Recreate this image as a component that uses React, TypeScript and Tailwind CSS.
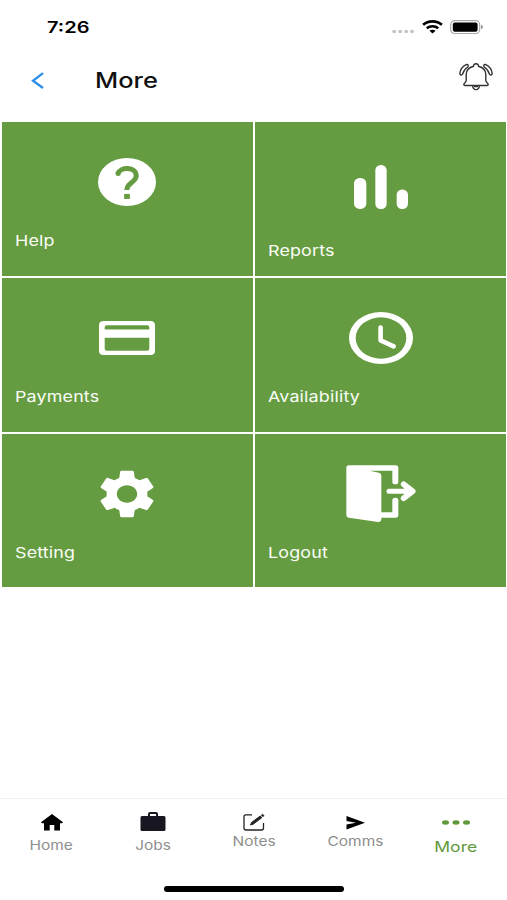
import React from 'react'
import { MdSettings } from 'react-icons/md'

interface TileProps {
  label: string
  iconClass: string
  labelClass: string
  children: React.ReactNode
}

const HelpIcon = () => (
  <svg className="w-[58px] h-[48px]" viewBox="296 129 173 143" preserveAspectRatio="none">
    <ellipse cx="382.5" cy="200.5" rx="86.5" ry="71.5" fill="#fff" />
    <path d="M355 176C362 154 410 154 410 182C410 202 382 202 382 224" fill="none" stroke="#669c41" strokeWidth="15" />
    <circle cx="356" cy="175" r="7.5" fill="#669c41" />
    <rect x="374" y="236" width="17" height="15" fill="#669c41" />
  </svg>
)

const ReportsIcon = () => (
  <svg className="w-[54px] h-[44px]" viewBox="298 151 162 133" preserveAspectRatio="none" fill="#fff">
    <rect x="298" y="190" width="37" height="94" rx="17" />
    <rect x="362" y="151" width="34" height="133" rx="16" />
    <rect x="426" y="225" width="34" height="59" rx="16" />
  </svg>
)

const CardIcon = () => (
  <svg className="w-[56px] h-[34px]" viewBox="299 138 167 103" preserveAspectRatio="none">
    <path
      fill="#fff"
      fillRule="evenodd"
      d="M313 138H452Q466 138 466 151V228Q466 241 452 241H313Q299 241 299 228V151Q299 138 313 138ZM316 164H449V157Q449 151 443 151H322Q316 151 316 157ZM316 189V222Q316 228 322 228H443Q449 228 449 222V189Z"
    />
  </svg>
)

const ClockIcon = () => (
  <svg className="w-[64px] h-[52px]" viewBox="0 0 64 52" fill="none" stroke="#fff">
    <path
      fill="#fff"
      stroke="none"
      fillRule="evenodd"
      d="M0 26A32 26 0 0 1 64 26A32 26 0 0 1 0 26ZM6.7 26A25.3 20.7 0 0 0 57.3 26A25.3 20.7 0 0 0 6.7 26Z"
    />
    <path d="M31.6 15.5V28.3L44.7 34.3" strokeWidth="4.6" strokeLinecap="round" strokeLinejoin="round" />
  </svg>
)

const LogoutIcon = () => (
  <svg className="w-[70px] h-[57px]" viewBox="275 106 210 171" preserveAspectRatio="none">
    <path d="M284 107H424Q432 107 432 115V156Q432 164 423 164Q414 164 414 156V123H346L374 129Q381 131 381 138V248H414V212Q414 204 423 204Q432 204 432 212V256Q432 264 424 264H381V269Q381 278 371 277L284 264Q276 263 276 255V115Q276 107 284 107Z" fill="#fff" />
    <path d="M404 185H464" stroke="#fff" strokeWidth="15" strokeLinecap="round" />
    <path d="M448 164L475 185L448 206" fill="none" stroke="#fff" strokeWidth="17" strokeLinecap="round" strokeLinejoin="round" />
    <path d="M450 170L474 185L450 200Z" fill="#fff" />
  </svg>
)

const BellIcon = () => (
  <svg className="w-[34px] h-[28px]" viewBox="0 0 34 28" fill="none" stroke="#333" strokeWidth="1.4" strokeLinejoin="round">
    <path d="M17 .8C15.2 .8 14.4 1.8 14.6 3.2C10.2 4.4 7.2 7.4 7.2 11.5V17.5C7.2 19.4 4.8 20 4.8 21.6Q4.8 22.5 6 22.5H28Q29.2 22.5 29.2 21.6C29.2 20 26.8 19.4 26.8 17.5V11.5C26.8 7.4 23.8 4.4 19.4 3.2C19.6 1.8 18.8 .8 17 .8Z" />
    <path d="M13.6 22.8C13.8 25.6 15 26.6 17 26.6S20.2 25.6 20.4 22.8M15 23.6H19" />
    <path d="M7.6 1.4C3.8 3.2 1.2 6.4 .8 10.6C1.2 12.4 3 12.4 3.6 11C4.4 8 6 5.8 8.8 4C9.8 2.8 9 1.2 7.6 1.4Z" />
    <path d="M26.4 1.4C30.2 3.2 32.8 6.4 33.2 10.6C32.8 12.4 31 12.4 30.4 11C29.6 8 28 5.8 25.2 4C24.2 2.8 25 1.2 26.4 1.4Z" />
  </svg>
)

const Tile: React.FC<TileProps> = ({ label, iconClass, labelClass, children }) => (
  <button className="flex flex-col items-start bg-[#669c41] text-left">
    <div className={`flex w-full justify-center ${iconClass}`}>{children}</div>
    <span className={`ml-[13px] origin-left scale-x-[1.19] text-[15px] leading-5 tracking-[0.15px] text-[#fafcf8] ${labelClass}`}>
      {label}
    </span>
  </button>
)

const StatusBar = () => (
  <div className="flex h-[54px] items-start justify-between pt-[17px] pr-[24px] pl-[47px]">
    <span className="origin-left scale-x-[1.25] text-[16px] leading-[21px] font-semibold text-black">7:26</span>
    <div className="flex items-start pt-[3px]">
      <svg className="mt-[9px] h-[5px] w-[22px]" viewBox="0 0 22 5" fill="#c4c4c4">
        <ellipse cx="2.2" cy="2.5" rx="2" ry="1.7" />
        <ellipse cx="8.2" cy="2.5" rx="2" ry="1.7" />
        <ellipse cx="14.2" cy="2.5" rx="2" ry="1.7" />
        <ellipse cx="20" cy="2.5" rx="2" ry="1.7" />
      </svg>
      <svg className="ml-[8px] h-[14px] w-[21px]" viewBox="0 0 21 14" fill="none" stroke="#000" strokeWidth="2.6">
        <path d="M1.1 4.8C6.2 .2 14.8 .2 19.9 4.8" />
        <path d="M4.8 8.3C8 5.5 13 5.5 16.2 8.3" />
        <path d="M7.4 10.7C9.3 9.3 11.7 9.3 13.6 10.7L10.5 13.4Z" fill="#000" stroke="none" />
      </svg>
      <svg className="ml-[7px] -mr-px h-[14px] w-[34px]" viewBox="0 0 34 14">
        <rect x=".7" y=".7" width="29" height="12.8" rx="4" fill="none" stroke="#aaa" strokeWidth="1.2" />
        <rect x="2.8" y="2.5" width="24.8" height="9.2" rx="2" />
        <path d="M31 4.8Q33 5.4 33 7T31 9.2Z" fill="#999" />
      </svg>
    </div>
  </div>
)

const Header = () => (
  <header className="flex h-[68px] items-start pr-[14px] pl-[31px]">
    <svg className="mt-[18px] h-[17px] w-[13px]" viewBox="0 0 13 17" fill="none" stroke="#2b8fe6" strokeWidth="2.3">
      <path d="M12 1.2L2 8.8L12 16" />
    </svg>
    <h1 className="mt-[13px] ml-[51px] origin-left scale-x-[1.21] text-[21px] leading-[28px] font-medium text-[#111]">More</h1>
    <div className="mt-[9px] ml-auto">
      <BellIcon />
    </div>
  </header>
)

const TabBar = () => (
  <nav className="flex h-[102px] flex-col justify-between border-t border-[#f0f0f0]">
    <div className="grid grid-cols-5 pl-px text-[13px] leading-4 text-[#8e8e8e]">
      <div className="flex flex-col items-center pt-[15px]">
        <svg className="h-[17px] w-[22px]" viewBox="0 0 22 17">
          <path d="M11 0L0 8.2L1 9.2H3V16.5H8.7V11H13.3V16.5H19V9.2H21L22 8.2Z" />
        </svg>
        <span className="mt-[6px] scale-x-[1.19]">Home</span>
      </div>
      <div className="flex flex-col items-center pt-[13px]">
        <svg className="h-[19px] w-[26px]" viewBox="0 0 26 19" fill="#181620">
          <path fillRule="evenodd" d="M8 4V2Q8 0 10 0H16Q18 0 18 2V4H24Q25.5 4 25.5 5.5V17.5Q25.5 19 24 19H2Q.5 19 .5 17.5V5.5Q.5 4 2 4ZM10 4H16V2H10Z" />
        </svg>
        <span className="mt-[6px] scale-x-[1.19]">Jobs</span>
      </div>
      <div className="flex flex-col items-center pt-[14px]">
        <svg className="h-[18px] w-[22px]" viewBox="0 0 22 18" fill="none" stroke="#222">
          <path d="M9 1.8H3Q1 1.8 1 3.8V15Q1 17 3 17H18.5Q20.5 17 20.5 15V10" strokeWidth="1.3" />
          <path d="M7.4 12L8.6 9.4L17.2 3L19 4.6L10.2 11.2Z" fill="#222" strokeWidth=".9" />
          <path d="M18.3 2.2L19.4 1.2L21.2 2.6L20 3.7Z" fill="#222" strokeWidth=".6" />
        </svg>
        <span className="mt-[2px] scale-x-[1.19]">Notes</span>
      </div>
      <div className="flex flex-col items-center pt-[17px]">
        <svg className="h-[14px] w-[19px]" viewBox="0 0 19 14">
          <path d="M.5 0L19 6.8L.5 13.5V8.5L10 6.8L.5 5Z" />
        </svg>
        <span className="mt-[3px] scale-x-[1.19]">Comms</span>
      </div>
      <div className="flex flex-col items-center pt-[21px] pr-px text-[#5f993b]">
        <svg className="h-[5px] w-[28px]" viewBox="0 0 28 5" fill="currentColor">
          <ellipse cx="3.5" cy="2.5" rx="3.5" ry="2.2" />
          <ellipse cx="14" cy="2.5" rx="3.5" ry="2.2" />
          <ellipse cx="24.5" cy="2.5" rx="3.5" ry="2.2" />
        </svg>
        <span className="mt-[14px] scale-x-[1.21] text-[14.5px]">More</span>
      </div>
    </div>
    <div className="mb-[8px] ml-[164px] h-[6px] w-[180px] rounded-full bg-black" />
  </nav>
)

export default function App() {
  return (
    <div className="flex h-[900px] w-[507px] flex-col overflow-hidden bg-white font-['Inter','Liberation_Sans',sans-serif]">
      <StatusBar />
      <Header />
      <main className="flex-1 pt-[0.4px] pr-[1.2px] pl-[2.2px]">
        <div className="grid grid-cols-2 grid-rows-[153.4px_153.4px_153.4px] gap-[2.4px]">
          <Tile label="Help" iconClass="pt-[36px]" labelClass="mt-[25px]">
            <HelpIcon />
          </Tile>
          <Tile label="Reports" iconClass="pt-[43px]" labelClass="mt-[32px]">
            <ReportsIcon />
          </Tile>
          <Tile label="Payments" iconClass="pt-[43px]" labelClass="mt-[32px]">
            <CardIcon />
          </Tile>
          <Tile label="Availability" iconClass="pt-[34px]" labelClass="mt-[23px]">
            <ClockIcon />
          </Tile>
          <Tile label="Setting" iconClass="pt-[31px]" labelClass="mt-[20px]">
            <MdSettings className="h-[58px] w-[68px] text-white" preserveAspectRatio="none" />
          </Tile>
          <Tile label="Logout" iconClass="pt-[31.5px]" labelClass="mt-[20.5px]">
            <LogoutIcon />
          </Tile>
        </div>
      </main>
      <TabBar />
    </div>
  )
}
